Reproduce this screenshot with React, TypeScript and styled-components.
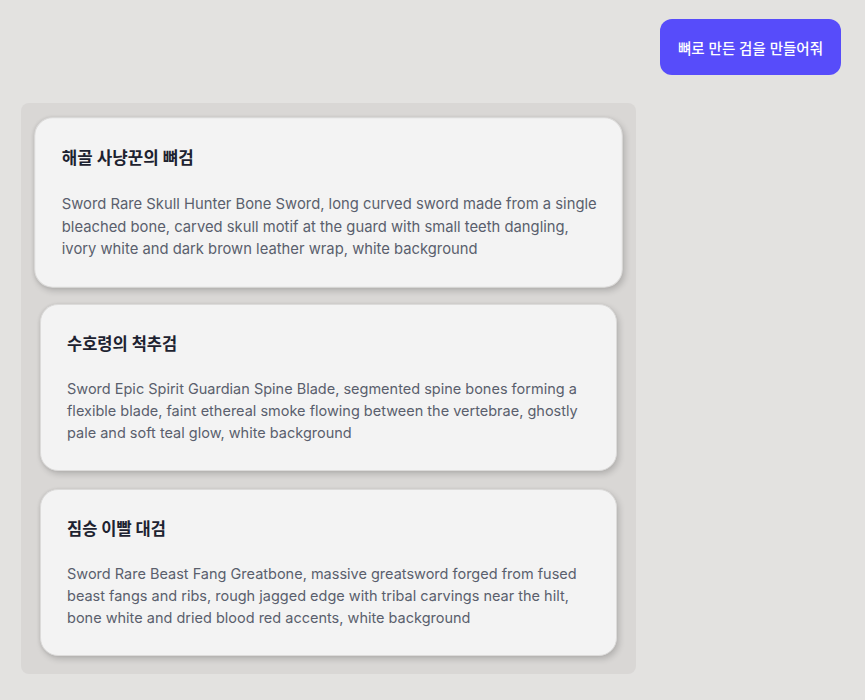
import React from "react";
import styled, { createGlobalStyle } from "styled-components";

const Global = createGlobalStyle`
  html, body { margin: 0; padding: 0; background: #e3e2e0; }
  body { font-family: Inter, "Noto Sans CJK KR", sans-serif; }
  * { box-sizing: border-box; }
`;

const Page = styled.div`
  width: 865px;
  height: 700px;
  padding: 19px 24px 0 21px;
  display: flex;
  flex-direction: column;
  gap: 28px;
`;

const UserRow = styled.div`
  display: flex;
  justify-content: flex-end;
`;

const Bubble = styled.div`
  background: #574cfa;
  color: #ffffff;
  border-radius: 12px;
  height: 56px;
  padding: 0 18px;
  display: flex;
  align-items: center;
  font-family: Inter, "Noto Sans CJK KR", sans-serif;
  font-size: 14.5px;
  font-weight: 500;
`;

const Panel = styled.div`
  width: 615px;
  background: #d9d7d5;
  border-radius: 8px;
  padding: 16px 19px 18px;
  display: flex;
  flex-direction: column;
  gap: 18px;
`;

const Card = styled.div<{ $active?: boolean }>`
  background: #f3f3f3;
  border: 1px solid #dcdbda;
  border-radius: 18px;
  padding: 27px 22px 26px 26px;
  box-shadow: 2px 3px 6px rgba(0, 0, 0, 0.18), -1px 0 3px rgba(0, 0, 0, 0.06);
  transform: ${(p) => (p.$active ? "scale(1.02)" : "none")};
`;

const Title = styled.div`
  font-family: Inter, "Noto Sans CJK KR", sans-serif;
  font-size: 16.5px;
  font-weight: 700;
  line-height: 24px;
  color: #1d2230;
  margin-bottom: 22px;
`;

const Desc = styled.div`
  font-family: Inter, "Noto Sans CJK KR", sans-serif;
  font-size: 14.5px;
  line-height: 22px;
  color: #5a5f6d;
`;

const items = [
  {
    title: "해골 사냥꾼의 뼈검",
    desc: "Sword Rare Skull Hunter Bone Sword, long curved sword made from a single bleached bone, carved skull motif at the guard with small teeth dangling, ivory white and dark brown leather wrap, white background",
  },
  {
    title: "수호령의 척추검",
    desc: "Sword Epic Spirit Guardian Spine Blade, segmented spine bones forming a flexible blade, faint ethereal smoke flowing between the vertebrae, ghostly pale and soft teal glow, white background",
  },
  {
    title: "짐승 이빨 대검",
    desc: "Sword Rare Beast Fang Greatbone, massive greatsword forged from fused beast fangs and ribs, rough jagged edge with tribal carvings near the hilt, bone white and dried blood red accents, white background",
  },
];

export default function App() {
  return (
    <>
      <Global />
      <Page>
        <UserRow>
          <Bubble>뼈로 만든 검을 만들어줘</Bubble>
        </UserRow>
        <Panel>
          {items.map((it, i) => (
            <Card key={i} $active={i === 0}>
              <Title>{it.title}</Title>
              <Desc>{it.desc}</Desc>
            </Card>
          ))}
        </Panel>
      </Page>
    </>
  );
}
